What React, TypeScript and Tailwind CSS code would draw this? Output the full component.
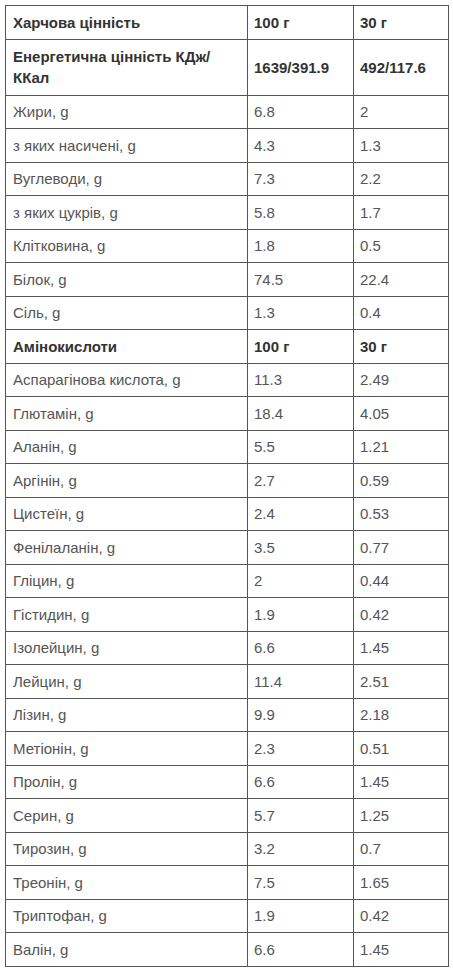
const font = { fontFamily: '"Liberation Sans", Arial, sans-serif' };

type Row = [string, string, string, boolean?];

const ROWS: Row[] = [
  ["Харчова цінність", "100 г", "30 г", true],
  ["Енергетична цінність КДж/ ККал", "1639/391.9", "492/117.6", true],
  ["Жири, g", "6.8", "2"],
  ["з яких насичені, g", "4.3", "1.3"],
  ["Вуглеводи, g", "7.3", "2.2"],
  ["з яких цукрів, g", "5.8", "1.7"],
  ["Клітковина, g", "1.8", "0.5"],
  ["Білок, g", "74.5", "22.4"],
  ["Сіль, g", "1.3", "0.4"],
  ["Амінокислоти", "100 г", "30 г", true],
  ["Аспарагінова кислота, g", "11.3", "2.49"],
  ["Глютамін, g", "18.4", "4.05"],
  ["Аланін, g", "5.5", "1.21"],
  ["Аргінін, g", "2.7", "0.59"],
  ["Цистеїн, g", "2.4", "0.53"],
  ["Фенілаланін, g", "3.5", "0.77"],
  ["Гліцин, g", "2", "0.44"],
  ["Гістидин, g", "1.9", "0.42"],
  ["Ізолейцин, g", "6.6", "1.45"],
  ["Лейцин, g", "11.4", "2.51"],
  ["Лізин, g", "9.9", "2.18"],
  ["Метіонін, g", "2.3", "0.51"],
  ["Пролін, g", "6.6", "1.45"],
  ["Серин, g", "5.7", "1.25"],
  ["Тирозин, g", "3.2", "0.7"],
  ["Треонін, g", "7.5", "1.65"],
  ["Триптофан, g", "1.9", "0.42"],
  ["Валін, g", "6.6", "1.45"],
];

export default function App() {
  return (
    <div className="bg-white w-[453px] min-h-[970px] pt-[5px] pl-[5px]" style={font}>
      <table className="w-[443px] border-collapse table-fixed text-[15px] leading-[21px]">
        <colgroup>
          <col className="w-[242px]" />
          <col className="w-[106px]" />
          <col className="w-[95px]" />
        </colgroup>
        <tbody>
          {ROWS.map(([name, a, b, bold], i) => (
            <tr
              key={i}
              className={
                (i === 1 ? "h-[56px] " : "h-[33.5px] ") +
                (bold ? "font-bold text-[#333]" : "text-[#555]")
              }
            >
              <td className="border border-[#555] px-[7px] py-0 align-middle">{name}</td>
              <td className="border border-[#555] px-[6px] py-0 align-middle">{a}</td>
              <td className="border border-[#555] px-[6px] py-0 align-middle">{b}</td>
            </tr>
          ))}
        </tbody>
      </table>
    </div>
  );
}
